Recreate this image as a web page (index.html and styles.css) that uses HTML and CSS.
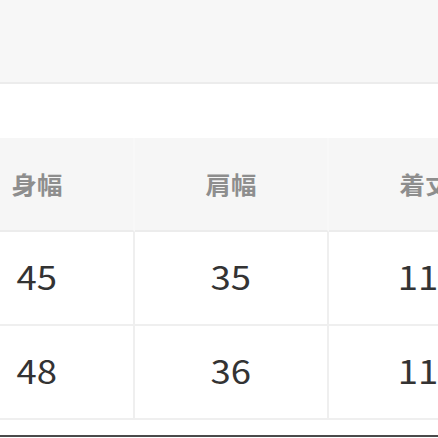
FILE: index.html
```html
<!DOCTYPE html>
<html lang="ja">
<head>
<meta charset="utf-8">
<link rel="stylesheet" href="styles.css">
</head>
<body>
<div class="topbar"></div>
<div class="spacer"></div>
<div class="table">
  <div class="cell head"><span class="t">身幅</span></div>
  <div class="cell head"><span class="t">肩幅</span></div>
  <div class="cell head last"><span class="t">着丈</span></div>
  <div class="cell"><span class="n">45</span></div>
  <div class="cell"><span class="n">35</span></div>
  <div class="cell last"><span class="n">110</span></div>
  <div class="cell"><span class="n">48</span></div>
  <div class="cell"><span class="n">36</span></div>
  <div class="cell last"><span class="n">112</span></div>
</div>
<div class="footer"></div>
</body>
</html>
```

FILE: styles.css
```css
html, body {
  margin: 0;
  padding: 0;
  width: 438px;
  height: 438px;
  overflow: hidden;
  background: #ffffff;
  font-family: "Noto Sans CJK JP", "Noto Sans", sans-serif;
}
.topbar {
  height: 82px;
  background: #f7f7f7;
  border-bottom: 2px solid #ececec;
}
.spacer {
  height: 54px;
}
.table {
  display: grid;
  grid-template-columns: repeat(3, 194px);
  grid-auto-rows: 94px;
  margin-left: -59px;
  width: 582px;
}
.cell {
  display: flex;
  align-items: center;
  justify-content: center;
  border-right: 2px solid #efefef;
  border-bottom: 2px solid #efefef;
  padding-bottom: 4px;
  box-sizing: border-box;
}
.cell.head {
  background: #f6f6f6;
  border-right-color: #f8f8f8;
  border-bottom-color: #ececec;
  padding-bottom: 2px;
}
.t {
  display: inline-block;
  font-size: 24px;
  font-weight: 700;
  color: #8e8e8e;
  transform: scaleX(1.06);
}
.n {
  display: inline-block;
  font-size: 32px;
  font-weight: 400;
  color: #333333;
  font-variant-numeric: tabular-nums;
  transform: scaleX(1.14);
}
.cell.last .n {
  padding-left: 6px;
}
.footer {
  height: 15px;
  border-bottom: 2px solid #4a4a4a;
}
```
